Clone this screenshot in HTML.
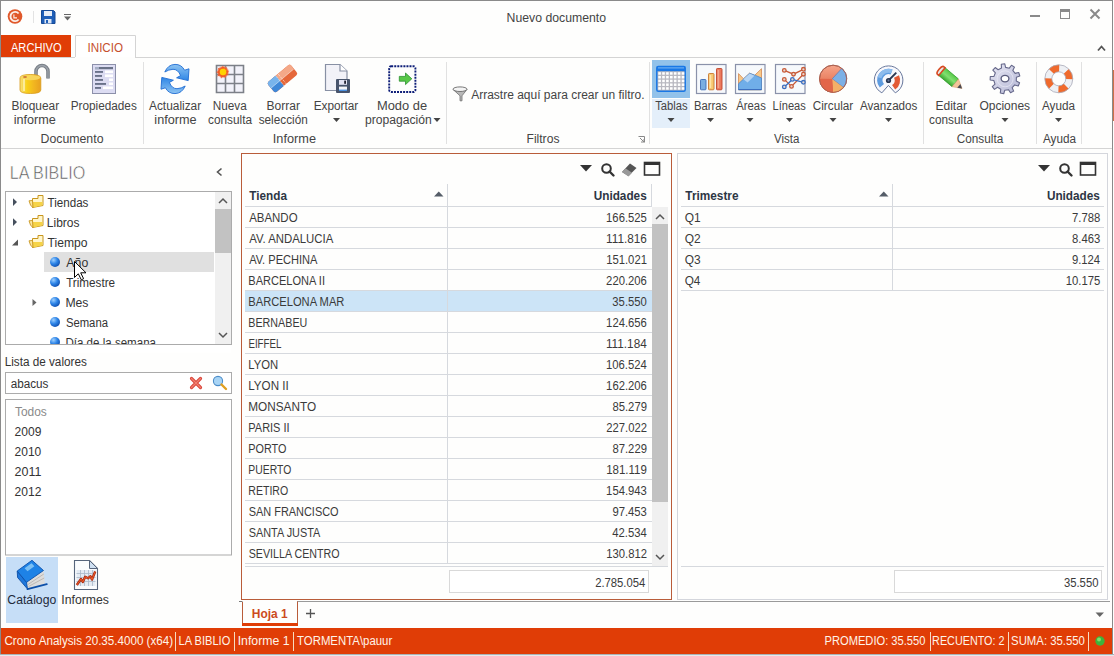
<!DOCTYPE html>
<html><head><meta charset="utf-8"><title>Nuevo documento</title>
<style>html,body{margin:0;padding:0;background:#fff;overflow:hidden}svg{display:block}text{font-family:"Liberation Sans", sans-serif}</style>
</head><body>
<svg width="1114" height="656" viewBox="0 0 1114 656">
<defs><radialGradient id="gball" cx="0.35" cy="0.3" r="0.75"><stop offset="0" stop-color="#9fd0ff"/><stop offset="0.5" stop-color="#2f86e8"/><stop offset="1" stop-color="#0f4fb0"/></radialGradient></defs>
<rect x="0" y="0" width="1114" height="656" fill="#fefefd" />
<text x="506.59" y="22" font-size="12.5" fill="#444" textLength="99.52" lengthAdjust="spacingAndGlyphs" >Nuevo documento</text>
<circle cx="15" cy="16.5" r="7.3" fill="#e0582a"/>
<path d="M18.6 13.5 A4.6 4.6 0 1 0 18.6 19.5" fill="none" stroke="#fbeee8" stroke-width="1.9"/>
<path d="M13.9 14.4 V17.9 H17" fill="none" stroke="#fbeee8" stroke-width="1.1"/>
<rect x="33" y="11" width="1" height="12" fill="#e3e3e3"/>
<g transform="translate(41,10)"><path d="M0.5 0.5h12l1.5 1.5v11.5h-13.5z" fill="#1f5fb8" stroke="#164a96"/><rect x="3" y="1" width="8" height="5" fill="#e8eef7"/><rect x="3.5" y="9" width="7" height="4.5" fill="#dfe8f5"/><rect x="5" y="10" width="2" height="3" fill="#1f5fb8"/></g>
<rect x="64" y="14" width="7" height="1" fill="#666"/>
<path d="M64.0 16.5h7l-3.5 4z" fill="#666"/>
<rect x="1030" y="15" width="10" height="2" fill="#8a8a8a"/>
<rect x="1060.5" y="9.5" width="9" height="9" fill="none" stroke="#8a8a8a"/>
<rect x="1060" y="9" width="10" height="3" fill="#8a8a8a"/>
<path d="M1090.5 9.5l9 9M1099.5 9.5l-9 9" stroke="#8a8a8a" stroke-width="2"/>
<rect x="1" y="35" width="70" height="22" fill="#e03d06" />
<text x="10.98" y="51.5" font-size="12" fill="#ffffff" textLength="50.55" lengthAdjust="spacingAndGlyphs" >ARCHIVO</text>
<path d="M75.5 57V35.5H135.5V57" fill="#fff" stroke="#d4d4d4"/>
<text x="87.53" y="51.5" font-size="12" fill="#c5502e" textLength="35.53" lengthAdjust="spacingAndGlyphs" >INICIO</text>
<rect x="1" y="57" width="74" height="1" fill="#d4d4d4"/>
<rect x="135" y="57" width="977" height="1" fill="#d4d4d4"/>
<path d="M1098 50.5l3.5-4 3.5 4" fill="none" stroke="#555" stroke-width="1.8"/>
<rect x="1" y="148" width="1111" height="1" fill="#d4d4d4"/>
<rect x="143" y="62" width="1" height="82" fill="#e1e1e1"/>
<rect x="446" y="62" width="1" height="82" fill="#e1e1e1"/>
<rect x="649" y="62" width="1" height="82" fill="#e1e1e1"/>
<rect x="923" y="62" width="1" height="82" fill="#e1e1e1"/>
<rect x="1036" y="62" width="1" height="82" fill="#e1e1e1"/>
<rect x="1081" y="62" width="1" height="82" fill="#e1e1e1"/>
<text x="11.52" y="110" font-size="12" fill="#444444" textLength="47.67" lengthAdjust="spacingAndGlyphs" >Bloquear</text>
<text x="13.66" y="124" font-size="12" fill="#444444" textLength="42.11" lengthAdjust="spacingAndGlyphs" >informe</text>
<text x="70.63" y="110" font-size="12" fill="#444444" textLength="66.19" lengthAdjust="spacingAndGlyphs" >Propiedades</text>
<text x="40.49" y="143" font-size="12" fill="#444444" textLength="63.03" lengthAdjust="spacingAndGlyphs" >Documento</text>
<text x="148.98" y="110" font-size="12" fill="#444444" textLength="52.22" lengthAdjust="spacingAndGlyphs" >Actualizar</text>
<text x="154.35" y="124" font-size="12" fill="#444444" textLength="42.21" lengthAdjust="spacingAndGlyphs" >informe</text>
<text x="212.63" y="110" font-size="12" fill="#444444" textLength="34.07" lengthAdjust="spacingAndGlyphs" >Nueva</text>
<text x="208.1" y="124" font-size="12" fill="#444444" textLength="43.9" lengthAdjust="spacingAndGlyphs" >consulta</text>
<text x="266.41" y="110" font-size="12" fill="#444444" textLength="33.49" lengthAdjust="spacingAndGlyphs" >Borrar</text>
<text x="258.67" y="124" font-size="12" fill="#444444" textLength="49.09" lengthAdjust="spacingAndGlyphs" >selección</text>
<text x="313.63" y="110" font-size="12" fill="#444444" textLength="44.56" lengthAdjust="spacingAndGlyphs" >Exportar</text>
<path d="M333.0 118.0h7l-3.5 4z" fill="#444"/>
<text x="376.94" y="110" font-size="12" fill="#444444" textLength="50.13" lengthAdjust="spacingAndGlyphs" >Modo de</text>
<text x="365.02" y="124" font-size="12" fill="#444444" textLength="66.77" lengthAdjust="spacingAndGlyphs" >propagación</text>
<path d="M433.5 118.0h7l-3.5 4z" fill="#444"/>
<text x="272.82" y="143" font-size="12" fill="#444444" textLength="43.24" lengthAdjust="spacingAndGlyphs" >Informe</text>
<text x="471.18" y="99" font-size="12" fill="#444444" textLength="173.32" lengthAdjust="spacingAndGlyphs" >Arrastre aquí para crear un filtro.</text>
<text x="526.51" y="143" font-size="12" fill="#444444" textLength="32.93" lengthAdjust="spacingAndGlyphs" >Filtros</text>
<path d="M638.5 136.5h6v6" fill="none" stroke="#888"/><path d="M640 138l4 4M641 142h3v-3" fill="none" stroke="#888"/>
<rect x="652" y="60" width="38" height="38" fill="#92c2ea" />
<rect x="652" y="99" width="38" height="29" fill="#e4effa" />
<text x="655.26" y="110" font-size="12" fill="#444444" textLength="32.43" lengthAdjust="spacingAndGlyphs" >Tablas</text>
<path d="M667.5 118.0h7l-3.5 4z" fill="#444"/>
<text x="693.88" y="110" font-size="12" fill="#444444" textLength="33.13" lengthAdjust="spacingAndGlyphs" >Barras</text>
<path d="M707.0 118.0h7l-3.5 4z" fill="#444"/>
<text x="736.28" y="110" font-size="12" fill="#444444" textLength="29.53" lengthAdjust="spacingAndGlyphs" >Áreas</text>
<path d="M746.5 118.0h7l-3.5 4z" fill="#444"/>
<text x="772.59" y="110" font-size="12" fill="#444444" textLength="33.21" lengthAdjust="spacingAndGlyphs" >Líneas</text>
<path d="M786.0 118.0h7l-3.5 4z" fill="#444"/>
<text x="812.8" y="110" font-size="12" fill="#444444" textLength="40.39" lengthAdjust="spacingAndGlyphs" >Circular</text>
<path d="M829.5 118.0h7l-3.5 4z" fill="#444"/>
<text x="859.98" y="110" font-size="12" fill="#444444" textLength="57.44" lengthAdjust="spacingAndGlyphs" >Avanzados</text>
<path d="M885.0 118.0h7l-3.5 4z" fill="#444"/>
<text x="773.95" y="143" font-size="12" fill="#444444" textLength="25.35" lengthAdjust="spacingAndGlyphs" >Vista</text>
<text x="935.51" y="110" font-size="12" fill="#444444" textLength="31.39" lengthAdjust="spacingAndGlyphs" >Editar</text>
<text x="929.1" y="124" font-size="12" fill="#444444" textLength="43.9" lengthAdjust="spacingAndGlyphs" >consulta</text>
<text x="979.43" y="110" font-size="12" fill="#444444" textLength="50.7" lengthAdjust="spacingAndGlyphs" >Opciones</text>
<path d="M1001.5 118.0h7l-3.5 4z" fill="#444"/>
<text x="956.8" y="143" font-size="12" fill="#444444" textLength="46.4" lengthAdjust="spacingAndGlyphs" >Consulta</text>
<text x="1041.98" y="110" font-size="12" fill="#444444" textLength="33.02" lengthAdjust="spacingAndGlyphs" >Ayuda</text>
<path d="M1055.0 118.0h7l-3.5 4z" fill="#444"/>
<text x="1042.98" y="143" font-size="12" fill="#444444" textLength="33.02" lengthAdjust="spacingAndGlyphs" >Ayuda</text>
<text stroke="#fefefd" stroke-width="0.55" x="9.69" y="178.7" font-size="18.5" fill="#555" textLength="75.58" lengthAdjust="spacingAndGlyphs" >LA BIBLIO</text>
<path d="M221.5 168.5l-4 3.5 4 3.5" fill="none" stroke="#555" stroke-width="1.6"/>
<rect x="5.5" y="191.5" width="226" height="153" fill="#fff" stroke="#ababab" stroke-width="1" />
<rect x="215" y="192" width="16" height="17" fill="#f0f0f0" />
<path d="M219 203l4-4 4 4" fill="none" stroke="#555" stroke-width="1.5"/>
<rect x="215" y="209" width="16" height="44" fill="#c2c2c2" />
<rect x="215" y="253" width="16" height="91" fill="#f0f0f0" />
<path d="M219 333l4 4 4-4" fill="none" stroke="#555" stroke-width="1.5"/>
<rect x="44" y="252" width="170" height="20" fill="#e0e0e0" />
<text x="47.54" y="207" font-size="12" fill="#333" textLength="40.87" lengthAdjust="spacingAndGlyphs" >Tiendas</text>
<g transform="translate(0,0)"><path d="M32.5 207.5 V198.5 H38 V195.5 H43 V205.5 Z" fill="#fff6cc" stroke="#c8961e" stroke-width="1"/><path d="M33 202 H42.5 V205.3 L33 207.5Z" fill="#f6d448"/><path d="M29 200.8 L32.5 200.5 L33 207.8 L30.5 205Z" fill="#fbe6a0" stroke="#c8961e" stroke-width="0.9"/></g>
<text x="46.82" y="227" font-size="12" fill="#333" textLength="32.61" lengthAdjust="spacingAndGlyphs" >Libros</text>
<g transform="translate(0,20)"><path d="M32.5 207.5 V198.5 H38 V195.5 H43 V205.5 Z" fill="#fff6cc" stroke="#c8961e" stroke-width="1"/><path d="M33 202 H42.5 V205.3 L33 207.5Z" fill="#f6d448"/><path d="M29 200.8 L32.5 200.5 L33 207.8 L30.5 205Z" fill="#fbe6a0" stroke="#c8961e" stroke-width="0.9"/></g>
<text x="47.53" y="247" font-size="12" fill="#333" textLength="39.97" lengthAdjust="spacingAndGlyphs" >Tiempo</text>
<g transform="translate(0,40)"><path d="M32.5 207.5 V198.5 H38 V195.5 H43 V205.5 Z" fill="#fff6cc" stroke="#c8961e" stroke-width="1"/><path d="M33 202 H42.5 V205.3 L33 207.5Z" fill="#f6d448"/><path d="M29 200.8 L32.5 200.5 L33 207.8 L30.5 205Z" fill="#fbe6a0" stroke="#c8961e" stroke-width="0.9"/></g>
<path d="M13 198.3v7.6l4-3.8z" fill="#46505e"/>
<path d="M13 218.3v7.6l4-3.8z" fill="#46505e"/>
<path d="M18 239.5v6h-6z" fill="#555"/>
<text x="66.38" y="267" font-size="12" fill="#333" textLength="21.84" lengthAdjust="spacingAndGlyphs" >Año</text>
<circle cx="55" cy="262" r="5" fill="url(#gball)"/>
<text x="66.14" y="287" font-size="12" fill="#333" textLength="48.98" lengthAdjust="spacingAndGlyphs" >Trimestre</text>
<circle cx="55" cy="282" r="5" fill="url(#gball)"/>
<text x="65.4" y="307" font-size="12" fill="#333" textLength="23.04" lengthAdjust="spacingAndGlyphs" >Mes</text>
<circle cx="55" cy="302" r="5" fill="url(#gball)"/>
<text x="65.89" y="327" font-size="12" fill="#333" textLength="42.11" lengthAdjust="spacingAndGlyphs" >Semana</text>
<circle cx="55" cy="322" r="5" fill="url(#gball)"/>
<text x="65.45" y="347" font-size="12" fill="#333" textLength="90.55" lengthAdjust="spacingAndGlyphs" >Día de la semana</text>
<circle cx="55" cy="342" r="5" fill="url(#gball)"/>
<path d="M32.5 299v7l4-3.5z" fill="#666"/>
<rect x="6" y="344.5" width="225" height="8" fill="#fff" />
<rect x="5" y="344" width="227" height="1" fill="#ababab"/>
<text x="4.64" y="366" font-size="12" fill="#333" textLength="82.19" lengthAdjust="spacingAndGlyphs" >Lista de valores</text>
<rect x="5.5" y="372.5" width="226" height="21" fill="#fff" stroke="#ababab" stroke-width="1" />
<text x="10.7" y="387.5" font-size="12" fill="#333" textLength="37.72" lengthAdjust="spacingAndGlyphs" >abacus</text>
<path d="M191.5 378.5l9 9M200.5 378.5l-9 9" stroke="#d9453a" stroke-width="3.2" stroke-linecap="round"/>
<path d="M191.5 378.5l9 9M200.5 378.5l-9 9" stroke="#f08070" stroke-width="1.2" stroke-linecap="round"/>
<circle cx="218" cy="381" r="4.6" fill="#a8d4f5" stroke="#4a8cc8" stroke-width="1.1"/>
<path d="M221.5 384.5l4.5 4.5" stroke="#e0a020" stroke-width="2.4" stroke-linecap="round"/>
<rect x="5.5" y="399.5" width="226" height="155.5" fill="#fff" stroke="#ababab" stroke-width="1" />
<text x="14.94" y="415.5" font-size="12" fill="#8a8a8a" textLength="31.87" lengthAdjust="spacingAndGlyphs" >Todos</text>
<text x="14.59" y="435.5" font-size="12" fill="#333" textLength="26.78" lengthAdjust="spacingAndGlyphs" >2009</text>
<text x="14.6" y="455.5" font-size="12" fill="#333" textLength="26.67" lengthAdjust="spacingAndGlyphs" >2010</text>
<text x="14.59" y="475.5" font-size="12" fill="#333" textLength="26.79" lengthAdjust="spacingAndGlyphs" >2011</text>
<text x="14.59" y="495.5" font-size="12" fill="#333" textLength="26.81" lengthAdjust="spacingAndGlyphs" >2012</text>
<rect x="6" y="557" width="52" height="66" fill="#c6def7" />
<text x="7.38" y="604" font-size="12" fill="#1e2a3a" textLength="48.83" lengthAdjust="spacingAndGlyphs" >Catálogo</text>
<text x="61.27" y="604" font-size="12" fill="#333" textLength="47.67" lengthAdjust="spacingAndGlyphs" >Informes</text>
<path d="M26.5 582.3 L43.5 570.5 L45 583.6 L27.5 589Z" fill="#dcdcdc"/>
<path d="M28 584.5 L43.8 574 M28.5 586.5 L44.2 578" stroke="#a8a098" stroke-width="0.6"/>
<path d="M27.5 589.2 L46.8 584.2" stroke="#0d4fa8" stroke-width="1.8" stroke-linecap="round"/>
<path d="M17.2 571 L26.5 582.3 L27.5 589 L17.6 577.5Z" fill="#1f78dc" stroke="#0d4fa8" stroke-width="0.9" stroke-linejoin="round"/>
<path d="M17.2 571 L32 560.3 L43.5 570.5 L26.5 582.3Z" fill="#1e82e6" stroke="#0d50aa" stroke-width="0.9" stroke-linejoin="round"/>
<path d="M24.6 568.2 L31.5 563.2 L34.4 566.3 L27.5 571.3Z" fill="#7cc0f4"/>
<path d="M74.5 560.5h15l8 8v21h-23z" fill="#fafcfe" stroke="#56657c" stroke-width="1.1"/>
<path d="M89.5 560.5v8h8z" fill="#cfe0f2" stroke="#56657c" stroke-width="1"/>
<rect x="76.5" y="570" width="19" height="16" fill="#e4ebf3"/>
<path d="M76.5 573.5h19M76.5 577.5h19M76.5 581.5h19M80.5 570v16M84.5 570v16M88.5 570v16M92.5 570v16" stroke="#a8b8c8" stroke-width="0.8"/>
<path d="M76.8 585 L81 579 L82.8 582 L85.2 576.8 L88 578.3 L90.5 576.2 L92 579.6 L95.2 571.5" fill="none" stroke="#a82a10" stroke-width="2.4" stroke-linejoin="round"/>
<path d="M76.8 585 L81 579 L82.8 582 L85.2 576.8 L88 578.3 L90.5 576.2 L92 579.6 L95.2 571.5" fill="none" stroke="#f05a28" stroke-width="1" stroke-linejoin="round"/>
<rect x="241.5" y="153.5" width="430" height="446" fill="#fefefd" stroke="#b95c3a" stroke-width="1" />
<path d="M580 165h12l-6 6.5z" fill="#333"/>
<circle cx="606.5" cy="168.5" r="4.3" fill="none" stroke="#333" stroke-width="2"/>
<path d="M609.5 171.5l4 4" stroke="#333" stroke-width="2.4" stroke-linecap="round"/>
<path d="M622 172l8-8.5 6.5 4.5-8 8z" fill="#555"/><path d="M622 172l3.5-3.8 6.5 4.5-3.5 3.8z" fill="#999"/>
<rect x="644.5" y="162.5" width="15" height="12.5" fill="none" stroke="#333" stroke-width="1.6"/>
<rect x="644" y="162" width="16" height="3" fill="#333"/>
<text x="249.27" y="200" font-size="12" fill="#2d3644" font-weight="bold" textLength="37.66" lengthAdjust="spacingAndGlyphs" >Tienda</text>
<text x="593.69" y="200" font-size="12" fill="#2d3644" font-weight="bold" textLength="52.99" lengthAdjust="spacingAndGlyphs" >Unidades</text>
<path d="M434 196.5h9.5l-4.75-5z" fill="#555d68"/>
<rect x="447" y="184" width="1" height="379" fill="#d6d9de"/>
<rect x="651" y="184" width="1" height="22" fill="#d6d9de"/>
<rect x="245" y="206" width="407" height="1" fill="#d6d9de"/>
<text x="249.18" y="222" font-size="12" fill="#3a3a3a" textLength="48.37" lengthAdjust="spacingAndGlyphs" >ABANDO</text>
<text x="606.1" y="222" font-size="12" fill="#3a3a3a" textLength="40.77" lengthAdjust="spacingAndGlyphs" >166.525</text>
<rect x="245" y="227" width="407" height="1" fill="#d6d9de"/>
<text x="249.18" y="243" font-size="12" fill="#3a3a3a" textLength="84.14" lengthAdjust="spacingAndGlyphs" >AV. ANDALUCIA</text>
<text x="606.12" y="243" font-size="12" fill="#3a3a3a" textLength="40.77" lengthAdjust="spacingAndGlyphs" >111.816</text>
<rect x="245" y="248" width="407" height="1" fill="#d6d9de"/>
<text x="249.18" y="264" font-size="12" fill="#3a3a3a" textLength="68.34" lengthAdjust="spacingAndGlyphs" >AV. PECHINA</text>
<text x="606.18" y="264" font-size="12" fill="#3a3a3a" textLength="40.77" lengthAdjust="spacingAndGlyphs" >151.021</text>
<rect x="245" y="269" width="407" height="1" fill="#d6d9de"/>
<text x="248.3" y="285" font-size="12" fill="#3a3a3a" textLength="76.71" lengthAdjust="spacingAndGlyphs" >BARCELONA II</text>
<text x="606.12" y="285" font-size="12" fill="#3a3a3a" textLength="40.77" lengthAdjust="spacingAndGlyphs" >220.206</text>
<rect x="245" y="290" width="407" height="1" fill="#d6d9de"/>
<rect x="245" y="291" width="407" height="20" fill="#cce4f7" />
<text x="248.29" y="306" font-size="12" fill="#3a3a3a" textLength="96.12" lengthAdjust="spacingAndGlyphs" >BARCELONA MAR</text>
<text x="612.34" y="306" font-size="12" fill="#3a3a3a" textLength="34.5" lengthAdjust="spacingAndGlyphs" >35.550</text>
<rect x="245" y="311" width="407" height="1" fill="#d6d9de"/>
<text x="248.32" y="327" font-size="12" fill="#3a3a3a" textLength="59.01" lengthAdjust="spacingAndGlyphs" >BERNABEU</text>
<text x="606.12" y="327" font-size="12" fill="#3a3a3a" textLength="40.77" lengthAdjust="spacingAndGlyphs" >124.656</text>
<rect x="245" y="332" width="407" height="1" fill="#d6d9de"/>
<text x="248.4" y="348" font-size="12" fill="#3a3a3a" textLength="33.02" lengthAdjust="spacingAndGlyphs" >EIFFEL</text>
<text x="605.96" y="348" font-size="12" fill="#3a3a3a" textLength="40.77" lengthAdjust="spacingAndGlyphs" >111.184</text>
<rect x="245" y="353" width="407" height="1" fill="#d6d9de"/>
<text x="248.3" y="369" font-size="12" fill="#3a3a3a" textLength="29.9" lengthAdjust="spacingAndGlyphs" >LYON</text>
<text x="605.96" y="369" font-size="12" fill="#3a3a3a" textLength="40.77" lengthAdjust="spacingAndGlyphs" >106.524</text>
<rect x="245" y="374" width="407" height="1" fill="#d6d9de"/>
<text x="248.27" y="390" font-size="12" fill="#3a3a3a" textLength="40.48" lengthAdjust="spacingAndGlyphs" >LYON II</text>
<text x="606.12" y="390" font-size="12" fill="#3a3a3a" textLength="40.77" lengthAdjust="spacingAndGlyphs" >162.206</text>
<rect x="245" y="395" width="407" height="1" fill="#d6d9de"/>
<text x="248.24" y="411" font-size="12" fill="#3a3a3a" textLength="67.82" lengthAdjust="spacingAndGlyphs" >MONSANTO</text>
<text x="612.43" y="411" font-size="12" fill="#3a3a3a" textLength="34.5" lengthAdjust="spacingAndGlyphs" >85.279</text>
<rect x="245" y="416" width="407" height="1" fill="#d6d9de"/>
<text x="248.32" y="432" font-size="12" fill="#3a3a3a" textLength="41.28" lengthAdjust="spacingAndGlyphs" >PARIS II</text>
<text x="606.19" y="432" font-size="12" fill="#3a3a3a" textLength="40.77" lengthAdjust="spacingAndGlyphs" >227.022</text>
<rect x="245" y="437" width="407" height="1" fill="#d6d9de"/>
<text x="248.32" y="453" font-size="12" fill="#3a3a3a" textLength="38.09" lengthAdjust="spacingAndGlyphs" >PORTO</text>
<text x="612.43" y="453" font-size="12" fill="#3a3a3a" textLength="34.5" lengthAdjust="spacingAndGlyphs" >87.229</text>
<rect x="245" y="458" width="407" height="1" fill="#d6d9de"/>
<text x="248.36" y="474" font-size="12" fill="#3a3a3a" textLength="42.84" lengthAdjust="spacingAndGlyphs" >PUERTO</text>
<text x="606.16" y="474" font-size="12" fill="#3a3a3a" textLength="40.77" lengthAdjust="spacingAndGlyphs" >181.119</text>
<rect x="245" y="479" width="407" height="1" fill="#d6d9de"/>
<text x="248.33" y="495" font-size="12" fill="#3a3a3a" textLength="39.87" lengthAdjust="spacingAndGlyphs" >RETIRO</text>
<text x="606.12" y="495" font-size="12" fill="#3a3a3a" textLength="40.77" lengthAdjust="spacingAndGlyphs" >154.943</text>
<rect x="245" y="500" width="407" height="1" fill="#d6d9de"/>
<text x="248.7" y="516" font-size="12" fill="#3a3a3a" textLength="89.92" lengthAdjust="spacingAndGlyphs" >SAN FRANCISCO</text>
<text x="612.39" y="516" font-size="12" fill="#3a3a3a" textLength="34.5" lengthAdjust="spacingAndGlyphs" >97.453</text>
<rect x="245" y="521" width="407" height="1" fill="#d6d9de"/>
<text x="248.72" y="537" font-size="12" fill="#3a3a3a" textLength="71.6" lengthAdjust="spacingAndGlyphs" >SANTA JUSTA</text>
<text x="612.23" y="537" font-size="12" fill="#3a3a3a" textLength="34.5" lengthAdjust="spacingAndGlyphs" >42.534</text>
<rect x="245" y="542" width="407" height="1" fill="#d6d9de"/>
<text x="248.72" y="558" font-size="12" fill="#3a3a3a" textLength="90.89" lengthAdjust="spacingAndGlyphs" >SEVILLA CENTRO</text>
<text x="606.19" y="558" font-size="12" fill="#3a3a3a" textLength="40.77" lengthAdjust="spacingAndGlyphs" >130.812</text>
<rect x="245" y="563" width="407" height="1" fill="#d6d9de"/>
<rect x="447" y="207" width="1" height="356" fill="#d6d9de"/>
<rect x="245" y="566" width="423" height="1" fill="#d6d9de"/>
<rect x="652" y="207" width="16" height="17" fill="#f0f0f0" />
<path d="M656 219l4-4 4 4" fill="none" stroke="#555" stroke-width="1.5"/>
<rect x="652" y="224" width="16" height="278" fill="#c2c2c2" />
<rect x="652" y="502" width="16" height="64" fill="#f0f0f0" />
<path d="M656 555l4 4 4-4" fill="none" stroke="#555" stroke-width="1.5"/>
<rect x="449.5" y="570.5" width="199" height="22" fill="#fff" stroke="#d9d9d9" stroke-width="1" />
<text x="595.15" y="587" font-size="12" fill="#3a3a3a" textLength="50.18" lengthAdjust="spacingAndGlyphs" >2.785.054</text>
<rect x="677.5" y="153.5" width="430" height="446" fill="#fefefd" stroke="#d4d6dc" stroke-width="1" />
<path d="M1038 165h12l-6 6.5z" fill="#333"/>
<circle cx="1064.5" cy="168.5" r="4.3" fill="none" stroke="#333" stroke-width="2"/>
<path d="M1067.5 171.5l4 4" stroke="#333" stroke-width="2.4" stroke-linecap="round"/>
<rect x="1080.5" y="162.5" width="15" height="12.5" fill="none" stroke="#333" stroke-width="1.6"/>
<rect x="1080" y="162" width="16" height="3" fill="#333"/>
<text x="685.37" y="200" font-size="12" fill="#2d3644" font-weight="bold" textLength="53.13" lengthAdjust="spacingAndGlyphs" >Trimestre</text>
<text x="1046.89" y="200" font-size="12" fill="#2d3644" font-weight="bold" textLength="52.99" lengthAdjust="spacingAndGlyphs" >Unidades</text>
<path d="M879 196.5h9.5l-4.75-5z" fill="#555d68"/>
<rect x="892" y="184" width="1" height="106" fill="#d6d9de"/>
<rect x="681" y="206" width="423" height="1" fill="#d6d9de"/>
<text x="684.63" y="222" font-size="12" fill="#3a3a3a" textLength="15.95" lengthAdjust="spacingAndGlyphs" >Q1</text>
<text x="1072.06" y="222" font-size="12" fill="#3a3a3a" textLength="28.23" lengthAdjust="spacingAndGlyphs" >7.788</text>
<rect x="681" y="227" width="423" height="1" fill="#d6d9de"/>
<text x="684.63" y="243" font-size="12" fill="#3a3a3a" textLength="15.97" lengthAdjust="spacingAndGlyphs" >Q2</text>
<text x="1072.07" y="243" font-size="12" fill="#3a3a3a" textLength="28.23" lengthAdjust="spacingAndGlyphs" >8.463</text>
<rect x="681" y="248" width="423" height="1" fill="#d6d9de"/>
<text x="684.64" y="264" font-size="12" fill="#3a3a3a" textLength="15.89" lengthAdjust="spacingAndGlyphs" >Q3</text>
<text x="1071.9" y="264" font-size="12" fill="#3a3a3a" textLength="28.23" lengthAdjust="spacingAndGlyphs" >9.124</text>
<rect x="681" y="269" width="423" height="1" fill="#d6d9de"/>
<text x="684.64" y="285" font-size="12" fill="#3a3a3a" textLength="15.7" lengthAdjust="spacingAndGlyphs" >Q4</text>
<text x="1065.77" y="285" font-size="12" fill="#3a3a3a" textLength="34.5" lengthAdjust="spacingAndGlyphs" >10.175</text>
<rect x="681" y="290" width="423" height="1" fill="#d6d9de"/>
<rect x="681" y="566" width="423" height="1" fill="#d6d9de"/>
<rect x="894.5" y="570.5" width="207" height="22" fill="#fff" stroke="#d9d9d9" stroke-width="1" />
<text x="1063.94" y="587" font-size="12" fill="#3a3a3a" textLength="34.5" lengthAdjust="spacingAndGlyphs" >35.550</text>
<rect x="297" y="601" width="813" height="1" fill="#9a9a9a"/>
<path d="M239 601.5h3.5" fill="none" stroke="#777"/><path d="M242.5 602V624M297.5 601.5V624" fill="none" stroke="#b95c3a"/>
<rect x="242" y="623" width="56" height="3" fill="#e03d06"/>
<text x="251.8" y="618" font-size="12.5" fill="#cc4a20" font-weight="bold" textLength="35.83" lengthAdjust="spacingAndGlyphs" >Hoja 1</text>
<path d="M310.5 609v9M306 613.5h9" stroke="#555" stroke-width="1.3"/>
<path d="M1095.5 612.5h8.5l-4.25 4.5z" fill="#666"/>
<rect x="1" y="628" width="1111" height="26" fill="#e03d06" />
<text x="4.41" y="645" font-size="12" fill="#fff4e8" textLength="168.71" lengthAdjust="spacingAndGlyphs" >Crono Analysis 20.35.4000 (x64)</text>
<rect x="175" y="632" width="1" height="19" fill="#f6dcc0"/>
<text x="178.6" y="645" font-size="12" fill="#fff4e8" textLength="51.72" lengthAdjust="spacingAndGlyphs" >LA BIBLIO</text>
<rect x="234" y="632" width="1" height="19" fill="#f6dcc0"/>
<text x="237.67" y="645" font-size="12" fill="#fff4e8" textLength="51.93" lengthAdjust="spacingAndGlyphs" >Informe 1</text>
<rect x="293" y="632" width="1" height="19" fill="#f6dcc0"/>
<text x="297.05" y="645" font-size="12" fill="#fff4e8" textLength="95.14" lengthAdjust="spacingAndGlyphs" >TORMENTA\pauur</text>
<text x="824.49" y="645" font-size="12" fill="#fff4e8" textLength="100.95" lengthAdjust="spacingAndGlyphs" >PROMEDIO: 35.550</text>
<rect x="930" y="632" width="1" height="19" fill="#f6dcc0"/>
<text x="932.12" y="645" font-size="12" fill="#fff4e8" textLength="72.43" lengthAdjust="spacingAndGlyphs" >RECUENTO: 2</text>
<rect x="1008" y="632" width="1" height="19" fill="#f6dcc0"/>
<text x="1011.08" y="645" font-size="12" fill="#fff4e8" textLength="73.86" lengthAdjust="spacingAndGlyphs" >SUMA: 35.550</text>
<rect x="1088" y="632" width="1" height="19" fill="#f6dcc0"/>
<circle cx="1100" cy="641" r="4.7" fill="#3cb43c"/>
<circle cx="1099" cy="639.5" r="2" fill="#7ddc6a"/>
<rect x="0" y="0" width="1113" height="1" fill="#8a8a8a"/>
<rect x="0" y="0" width="1" height="654" fill="#8a8a8a"/>
<rect x="1112" y="0" width="1" height="654" fill="#8a8a8a"/>
<rect x="0" y="654" width="1114" height="1" fill="#aab2b6"/>
<rect x="0" y="655" width="1114" height="1" fill="#e6eaec"/>
<rect x="1113" y="70" width="1" height="51" fill="#d0704a"/>
<defs>
<linearGradient id="glock" x1="0" x2="1" y1="0" y2="0"><stop offset="0" stop-color="#f7e07a"/><stop offset="0.35" stop-color="#f8cf18"/><stop offset="0.65" stop-color="#f2b720"/><stop offset="1" stop-color="#e8a020"/></linearGradient>
<linearGradient id="gref" x1="0" x2="0" y1="0" y2="1"><stop offset="0" stop-color="#2e86e6"/><stop offset="1" stop-color="#8ec4f2"/></linearGradient>
<linearGradient id="gref2" x1="0" x2="0" y1="1" y2="0"><stop offset="0" stop-color="#2e86e6"/><stop offset="1" stop-color="#8ec4f2"/></linearGradient>
<radialGradient id="gsun" cx="0.5" cy="0.5" r="0.5"><stop offset="0" stop-color="#ffd000"/><stop offset="0.45" stop-color="#ffc400"/><stop offset="0.7" stop-color="#f06030"/><stop offset="1" stop-color="#f8a080" stop-opacity="0"/></radialGradient>
<linearGradient id="gpie" x1="0" x2="0" y1="0" y2="1"><stop offset="0" stop-color="#f5a58a"/><stop offset="1" stop-color="#e0603e"/></linearGradient>
<linearGradient id="ggear" x1="0" x2="1" y1="0" y2="1"><stop offset="0" stop-color="#e8e8f4"/><stop offset="1" stop-color="#b4b6d4"/></linearGradient>
<linearGradient id="gpen" x1="0" x2="0" y1="0" y2="1"><stop offset="0" stop-color="#58c848"/><stop offset="0.5" stop-color="#80e070"/><stop offset="1" stop-color="#3aa830"/></linearGradient>
</defs>
<path d="M36 77 V71.5 A6 6 0 0 1 48 71.5 V78.6" fill="none" stroke="#7a8088" stroke-width="3.6"/>
<path d="M36 77 V71.5 A6 6 0 0 1 48 71.5 V78.6" fill="none" stroke="#9ca2aa" stroke-width="1.3"/>
<path d="M20 78 Q20 74.5 30.4 74.5 Q40.8 74.5 40.8 78 V90 Q40.8 93.5 30.4 93.5 Q20 93.5 20 90Z" fill="url(#glock)" stroke="#d89a18" stroke-width="0.8"/>
<ellipse cx="30.4" cy="77.6" rx="10" ry="2.6" fill="#f8d860" opacity="0.9"/>
<rect x="23" y="79" width="2" height="12" fill="#fbf0b0" opacity="0.8"/>
<ellipse cx="25" cy="77" rx="2" ry="0.8" fill="#c05a2a"/>
<rect x="92.5" y="64.5" width="23" height="29" fill="#dcdcf2" stroke="#8c90aa"/>
<rect x="95" y="67" width="18" height="2.2" fill="#6a7288"/><rect x="95" y="67" width="4" height="2.2" fill="#a4aec4"/>
<rect x="95" y="71.2" width="8" height="1.5" fill="#4e5870"/>
<rect x="105" y="70.5" width="8" height="2.6" fill="#ffffff"/>
<rect x="95" y="75.2" width="7" height="1.5" fill="#4e5870"/>
<rect x="105" y="74.5" width="8" height="2.6" fill="#ffffff"/>
<rect x="95" y="79.2" width="8" height="1.5" fill="#4e5870"/>
<rect x="109" y="78.5" width="4" height="2.6" fill="#ffffff"/>
<rect x="95" y="83.2" width="11" height="1.5" fill="#4e5870"/>
<rect x="109" y="82.5" width="4" height="2.6" fill="#ffffff"/>
<rect x="95" y="87.2" width="6" height="1.5" fill="#4e5870"/>
<rect x="103" y="86.5" width="10" height="2.6" fill="#ffffff"/>
<g transform="translate(155,60)"><path d="M9.8 12 Q13 4.6 20 4.4 Q26.5 4.3 29.6 10.2 L34 8.8 L33.2 20.6 L21.6 17.8 L25.6 15.6 Q23 9.2 18 9.3 Q13.5 9.6 9.8 12Z" fill="url(#gref2)" stroke="#1f6cd2" stroke-width="0.9"/><g transform="rotate(180 20 19)"><path d="M9.8 12 Q13 4.6 20 4.4 Q26.5 4.3 29.6 10.2 L34 8.8 L33.2 20.6 L21.6 17.8 L25.6 15.6 Q23 9.2 18 9.3 Q13.5 9.6 9.8 12Z" fill="url(#gref2)" stroke="#1f6cd2" stroke-width="0.9"/></g></g>
<rect x="216.5" y="65.5" width="27" height="27" fill="#f2f2fa"/>
<path d="M216.5 65.5h27v27h-27zM225.5 65.5v27M234.5 65.5v27M216.5 74.5h27M216.5 83.5h27" fill="none" stroke="#7c8088" stroke-width="1.6"/>
<circle cx="223" cy="72" r="6.5" fill="url(#gsun)"/>
<path d="M223 65.5l1 3.5 3-2-1.2 3.4 3.6.6-3.2 1.8 2.6 2.4-3.5-.5.2 3.6-2.5-2.6-2 3-.6-3.5-3.4 1.2 2-3-3.2-1.5 3.4-.9-1.5-3.3 3.2 1.4z" fill="#f05828" opacity="0.85"/>
<circle cx="223" cy="72" r="3.2" fill="#ffd200"/>
<g transform="rotate(-40 282.5 78.5)"><rect x="267.5" y="72" width="30" height="13" rx="2.5" fill="#e5673a"/><rect x="267.5" y="72" width="30" height="6.5" rx="2" fill="#f4a888"/><path d="M270 72 h9 v13 h-9 a2.5 2.5 0 0 1 -2.5 -2.5 v-8 a2.5 2.5 0 0 1 2.5 -2.5z" fill="#3f88d8"/><path d="M270 72 h9 v6.5 h-11.5 v-4 a2.5 2.5 0 0 1 2.5 -2.5z" fill="#78b4ec"/><path d="M279 72v13M282 72v13" stroke="#fff" stroke-width="0.8" stroke-dasharray="1 1" opacity="0.85"/><path d="M267.5 78.5h30" stroke="#fff" stroke-width="0.7" opacity="0.6"/></g>
<path d="M325.5 64.5h14.5l7 6.5v19.5h-21.5z" fill="#f2f2f8" stroke="#8890a4" stroke-width="1.2"/>
<path d="M340 64.5v6.5h7" fill="#ffffff" stroke="#8890a4" stroke-width="1.2"/>
<rect x="336" y="79" width="14" height="14" rx="1" fill="#48546c"/>
<rect x="339" y="80" width="8" height="4.8" fill="#e4e4f4"/>
<rect x="344.2" y="80.6" width="1.8" height="3.2" fill="#202030"/>
<rect x="339" y="86.6" width="8" height="4.4" fill="#f4f4f8"/>
<rect x="339" y="89.6" width="8" height="1.4" fill="#4a90e0"/>
<rect x="389.2" y="66.2" width="26.2" height="25.8" rx="2" fill="none" stroke="#0e1e78" stroke-width="1.9" stroke-dasharray="2 1.05"/>
<path d="M399.3 76.4h6.2v-3.4l6.3 5.8-6.3 5.8v-3.4h-6.2z" fill="#58c848" stroke="#2a9030" stroke-width="0.8"/>
<path d="M453 89.4 L460 95.8 V100.8 H462 V95.8 L467 89.4Z" fill="#b8b8b8" stroke="#707070" stroke-width="0.8"/>
<ellipse cx="460" cy="89.2" rx="7" ry="2.3" fill="#f4f4f4" stroke="#6a6a6a" stroke-width="0.9"/>
<rect x="656.8" y="66.6" width="28.4" height="24.6" rx="1.5" fill="#b8b8c0" stroke="#1a78e6" stroke-width="1.5"/>
<rect x="656.8" y="66.6" width="28.4" height="4.6" fill="#1a78e6"/>
<rect x="658" y="67.4" width="26" height="1" fill="#7ab8f4"/>
<rect x="658.30" y="72.20" width="2.6" height="2.5" fill="#ffffff"/>
<rect x="658.30" y="75.95" width="2.6" height="2.5" fill="#ffffff"/>
<rect x="658.30" y="79.70" width="2.6" height="2.5" fill="#ffffff"/>
<rect x="658.30" y="83.45" width="2.6" height="2.5" fill="#ffffff"/>
<rect x="658.30" y="87.20" width="2.6" height="2.5" fill="#ffffff"/>
<rect x="662.20" y="72.20" width="2.6" height="2.5" fill="#ffffff"/>
<rect x="662.20" y="75.95" width="2.6" height="2.5" fill="#ffffff"/>
<rect x="662.20" y="79.70" width="2.6" height="2.5" fill="#ffffff"/>
<rect x="662.20" y="83.45" width="2.6" height="2.5" fill="#ffffff"/>
<rect x="662.20" y="87.20" width="2.6" height="2.5" fill="#ffffff"/>
<rect x="666.10" y="72.20" width="2.6" height="2.5" fill="#ffffff"/>
<rect x="666.10" y="75.95" width="2.6" height="2.5" fill="#ffffff"/>
<rect x="666.10" y="79.70" width="2.6" height="2.5" fill="#ffffff"/>
<rect x="666.10" y="83.45" width="2.6" height="2.5" fill="#ffffff"/>
<rect x="666.10" y="87.20" width="2.6" height="2.5" fill="#ffffff"/>
<rect x="670.00" y="72.20" width="2.6" height="2.5" fill="#ffffff"/>
<rect x="670.00" y="75.95" width="2.6" height="2.5" fill="#ffffff"/>
<rect x="670.00" y="79.70" width="2.6" height="2.5" fill="#ffffff"/>
<rect x="670.00" y="83.45" width="2.6" height="2.5" fill="#ffffff"/>
<rect x="670.00" y="87.20" width="2.6" height="2.5" fill="#ffffff"/>
<rect x="673.90" y="72.20" width="2.6" height="2.5" fill="#ffffff"/>
<rect x="673.90" y="75.95" width="2.6" height="2.5" fill="#ffffff"/>
<rect x="673.90" y="79.70" width="2.6" height="2.5" fill="#ffffff"/>
<rect x="673.90" y="83.45" width="2.6" height="2.5" fill="#ffffff"/>
<rect x="673.90" y="87.20" width="2.6" height="2.5" fill="#ffffff"/>
<rect x="677.80" y="72.20" width="2.6" height="2.5" fill="#ffffff"/>
<rect x="677.80" y="75.95" width="2.6" height="2.5" fill="#ffffff"/>
<rect x="677.80" y="79.70" width="2.6" height="2.5" fill="#ffffff"/>
<rect x="677.80" y="83.45" width="2.6" height="2.5" fill="#ffffff"/>
<rect x="677.80" y="87.20" width="2.6" height="2.5" fill="#ffffff"/>
<rect x="681.70" y="72.20" width="2.6" height="2.5" fill="#ffffff"/>
<rect x="681.70" y="75.95" width="2.6" height="2.5" fill="#ffffff"/>
<rect x="681.70" y="79.70" width="2.6" height="2.5" fill="#ffffff"/>
<rect x="681.70" y="83.45" width="2.6" height="2.5" fill="#ffffff"/>
<rect x="681.70" y="87.20" width="2.6" height="2.5" fill="#ffffff"/>
<rect x="696.5" y="64.5" width="29.5" height="29" fill="#f6f9fc" stroke="#8a92aa" stroke-width="1.2"/>
<rect x="735.5" y="64.5" width="29.5" height="29" fill="#f6f9fc" stroke="#8a92aa" stroke-width="1.2"/>
<rect x="775.5" y="64.5" width="29.5" height="29" fill="#f6f9fc" stroke="#8a92aa" stroke-width="1.2"/>
<rect x="700.5" y="79.5" width="5.5" height="10.3" rx="0.8" fill="#7aaee0" stroke="#3c6cb4" stroke-width="0.9"/>
<rect x="708.5" y="73.5" width="5.5" height="16.3" rx="0.8" fill="#f8c870" stroke="#c87830" stroke-width="0.9"/>
<rect x="716.5" y="68.5" width="5.5" height="21.3" rx="0.8" fill="#ec7a5e" stroke="#c0442a" stroke-width="0.9"/>
<rect x="709.6" y="75" width="1.6" height="13" fill="#fff0c0" opacity="0.7"/>
<rect x="717.6" y="70" width="1.6" height="18" fill="#f8b8a0" opacity="0.7"/>
<path d="M738.5 73.6 L743.5 78.8 L749.6 73.2 L754.5 75.5 L761.5 68.7 V89.8 H738.5Z" fill="#f8c888" stroke="#d08850" stroke-width="0.8"/>
<path d="M738.5 83.8 L749.6 73.3 L755.5 75.4 L761.5 78 V89.8 H738.5Z" fill="#70aee8" stroke="#4a86cc" stroke-width="0.8"/>
<path d="M743.4 79.2 L749.6 73.6 L754.4 75.8 L747.6 82.6Z" fill="#b4d4f4"/>
<rect x="738.5" y="89" width="23" height="1" fill="#3c70c0"/>
<path d="M784.3 70.4 L793.5 74.2 L803.4 69.3" fill="none" stroke="#c85a38" stroke-width="1.3"/>
<circle cx="784.3" cy="70.4" r="1.8" fill="#e8d8d0" stroke="#c85a38" stroke-width="1.3"/>
<circle cx="793.5" cy="74.2" r="1.8" fill="#e8d8d0" stroke="#c85a38" stroke-width="1.3"/>
<circle cx="803.4" cy="69.3" r="1.8" fill="#e8d8d0" stroke="#c85a38" stroke-width="1.3"/>
<path d="M784.3 79.4 L791.5 86.4 L803.4 74.2" fill="none" stroke="#c85a38" stroke-width="1.3"/>
<circle cx="784.3" cy="79.4" r="1.8" fill="#e8d8d0" stroke="#c85a38" stroke-width="1.3"/>
<circle cx="791.5" cy="86.4" r="1.8" fill="#e8d8d0" stroke="#c85a38" stroke-width="1.3"/>
<circle cx="803.4" cy="74.2" r="1.8" fill="#e8d8d0" stroke="#c85a38" stroke-width="1.3"/>
<path d="M784.3 86.9 L792.4 79.4 L803.4 82.3" fill="none" stroke="#3a6ec0" stroke-width="1.3"/>
<circle cx="784.3" cy="86.9" r="1.8" fill="#e8d8d0" stroke="#3a6ec0" stroke-width="1.3"/>
<circle cx="792.4" cy="79.4" r="1.8" fill="#e8d8d0" stroke="#3a6ec0" stroke-width="1.3"/>
<circle cx="803.4" cy="82.3" r="1.8" fill="#e8d8d0" stroke="#3a6ec0" stroke-width="1.3"/>
<circle cx="833.1" cy="78.8" r="13.6" fill="url(#gpie)" stroke="#b06048" stroke-width="0.9"/>
<path d="M832.2 78.9 L841.84 68.38 A13.6 13.6 0 0 1 843.52 87.54Z" fill="#7cb0e6" stroke="#5a7ab8" stroke-width="0.7"/>
<path d="M832.2 78.9 L843.52 87.54 A13.6 13.6 0 0 1 833.10 92.40Z" fill="#f4b068"/>
<path d="M832.2 78.9 L833.10 92.40 A13.6 13.6 0 0 1 819.50 78.80Z" fill="#e2664a"/>
<circle cx="833.1" cy="78.8" r="13.6" fill="none" stroke="#a86050" stroke-width="0.9"/>
<path d="M881.89 92.83 A14.3 14.3 0 1 1 895.31 92.83 L888.4 85.4Z" fill="#f8f8fc" stroke="#68789c" stroke-width="1"/>
<path d="M879.79 87.59 A11.5 11.5 0 0 1 892.53 69.39 L890.65 74.56 A6 6 0 0 0 884.00 84.06Z" fill="#5e9ce0"/>
<path d="M877.49 77.22 A11.5 11.5 0 0 1 892.53 69.39 L891.17 73.15 A7.5 7.5 0 0 0 881.36 78.26Z" fill="#8ebcec"/>
<path d="M899.02 75.34 A11.5 11.5 0 0 1 895.20 89.62 L892.04 85.11 A6 6 0 0 0 894.04 77.66Z" fill="#e25a36"/>
<path d="M888.5 80.5 L896.3 72.6" stroke="#283650" stroke-width="1.8"/>
<circle cx="888.5" cy="80.5" r="2.6" fill="#283650"/>
<circle cx="888.5" cy="80.5" r="1" fill="#6a7aa0"/>
<g transform="translate(950.7 79) rotate(40)"><rect x="-11.5" y="-5" width="17.5" height="10" fill="url(#gpen)" stroke="#2c9a28" stroke-width="0.7"/><path d="M-11.5 -5 h-1.5 a2.2 5 0 0 0 0 10 h1.5z" fill="#e6e6e6" stroke="#d84a22" stroke-width="1.6"/><path d="M6 -5 L14.8 0 L6 5Z" fill="#f2c49a" stroke="#d8a070" stroke-width="0.5"/><path d="M10.6 -2.4 L14.8 0 L10.6 2.4Z" fill="#4a4a52"/></g>
<path d="M1001.50 67.98 L1001.27 64.30 L1004.79 63.80 L1005.58 67.41 L1009.30 68.20 L1011.49 65.23 L1014.50 67.11 L1012.79 70.38 L1015.13 73.38 L1018.72 72.51 L1019.81 75.89 L1016.40 77.29 L1016.27 81.09 L1019.58 82.73 L1018.24 86.03 L1014.73 84.91 L1012.18 87.73 L1013.66 91.12 L1010.52 92.78 L1008.55 89.67 L1004.78 90.20 L1003.74 93.74 L1000.27 93.00 L1000.76 89.34 L997.53 87.32 L994.46 89.37 L992.27 86.57 L995.00 84.08 L993.82 80.47 L990.15 80.06 L990.28 76.51 L993.97 76.35 L995.39 72.83 L992.84 70.15 L995.22 67.51 L998.14 69.77Z" fill="url(#ggear)" stroke="#66688a" stroke-width="1.1" stroke-linejoin="round"/>
<circle cx="1005.1" cy="78.8" r="8" fill="none" stroke="#f0f0fa" stroke-width="1" opacity="0.6"/>
<ellipse cx="1005" cy="78.6" rx="3.9" ry="3.3" fill="#ffffff" stroke="#5a5c7c" stroke-width="1.3"/>
<circle cx="1058.8" cy="78.8" r="10.5" fill="none" stroke="#eef0f4" stroke-width="7"/>
<path d="M1048.90 68.90 A14 14 0 0 1 1059.29 64.81 L1059.04 71.80 A7 7 0 0 0 1053.85 73.85Z" fill="#f06a2c"/>
<path d="M1068.70 68.90 A14 14 0 0 1 1072.79 79.29 L1065.80 79.04 A7 7 0 0 0 1063.75 73.85Z" fill="#f06a2c"/>
<path d="M1068.70 88.70 A14 14 0 0 1 1058.31 92.79 L1058.56 85.80 A7 7 0 0 0 1063.75 83.75Z" fill="#f06a2c"/>
<path d="M1048.90 88.70 A14 14 0 0 1 1044.81 78.31 L1051.80 78.56 A7 7 0 0 0 1053.85 83.75Z" fill="#f06a2c"/>
<circle cx="1058.8" cy="78.8" r="14" fill="none" stroke="#a8aab8" stroke-width="0.8"/>
<circle cx="1058.8" cy="78.8" r="7" fill="none" stroke="#a8aab8" stroke-width="0.8"/>
<path d="M74.5 261.5 V277.5 L78.3 273.8 L81.3 279.8 L83.6 278.7 L80.7 272.8 L86 272.8Z" fill="#ffffff" stroke="#000000" stroke-width="1" stroke-linejoin="miter"/>
</svg>
</body></html>
